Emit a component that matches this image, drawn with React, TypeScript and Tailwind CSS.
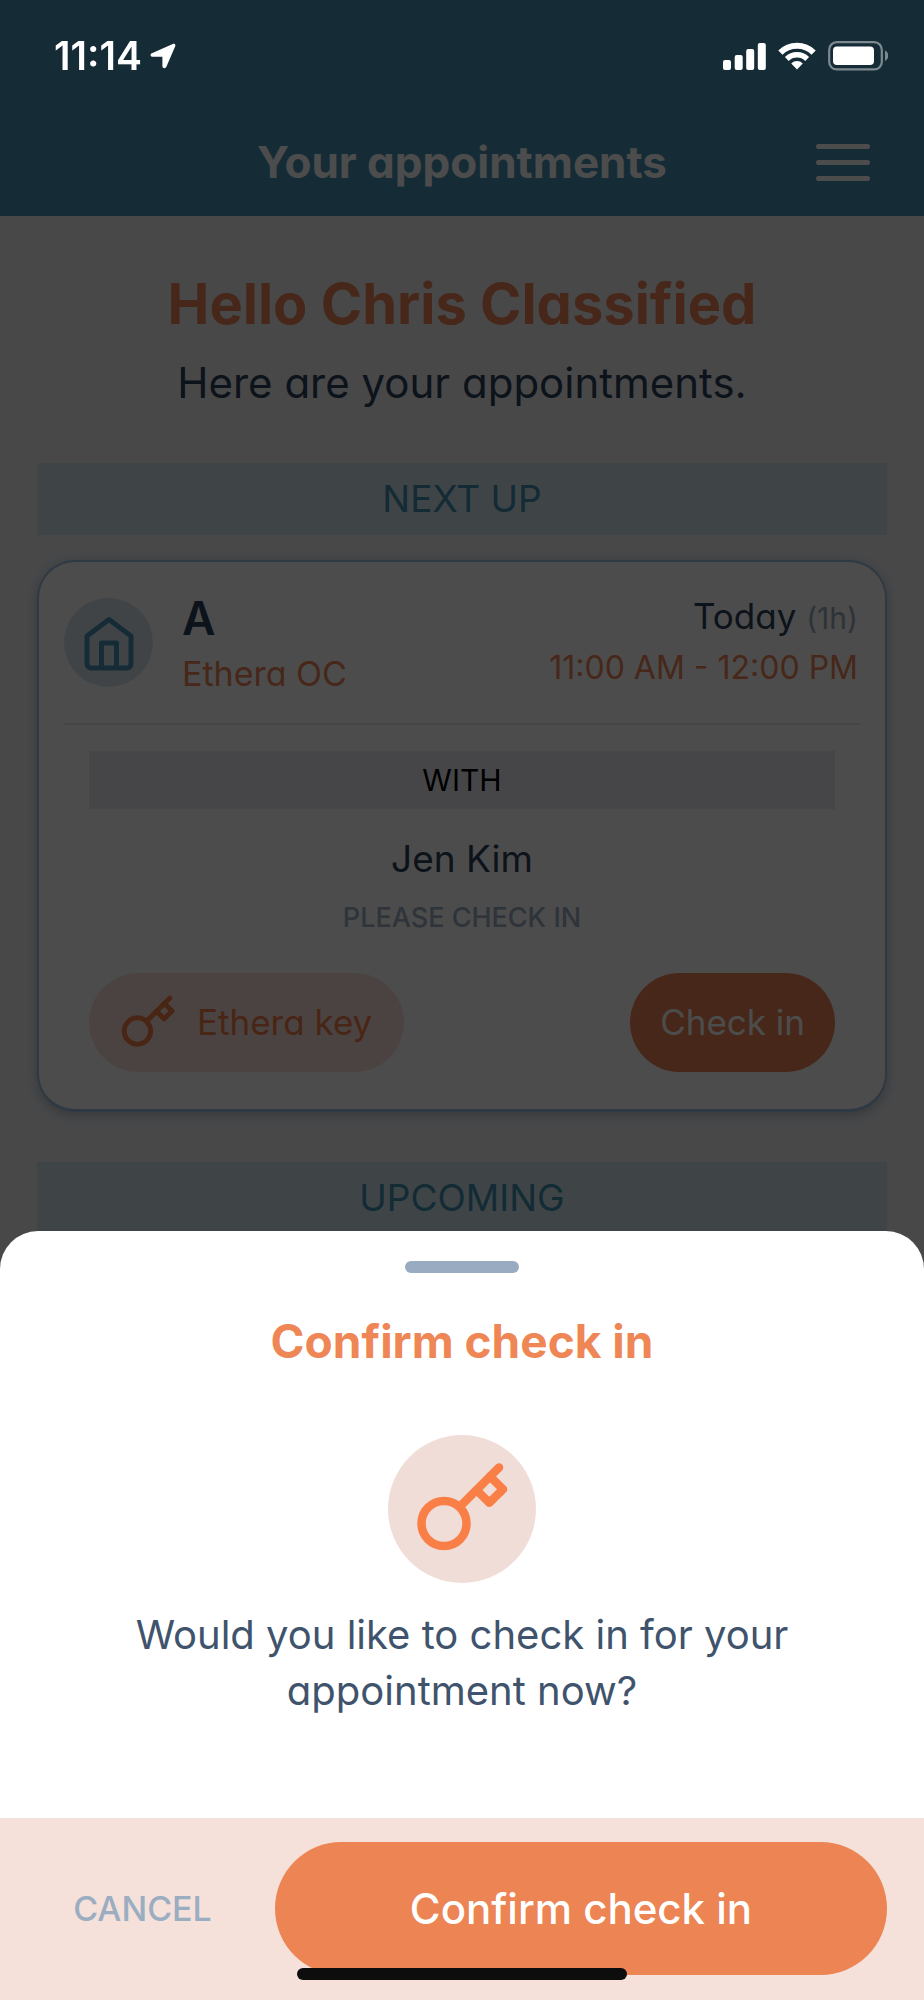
import { type ReactNode } from 'react';

type IconProps = { className?: string };

const appointment = {
    room: 'A',
    location: 'Ethera OC',
    day: 'Today',
    duration: '(1h)',
    time: '11:00 AM - 12:00 PM',
    host: 'Jen Kim',
};

function KeyIcon({ className }: IconProps) {
    return (
        <svg
            viewBox="0 2 92 90"
            fill="none"
            stroke="currentColor"
            strokeWidth="8.5"
            strokeLinecap="round"
            strokeLinejoin="round"
            overflow="visible"
            aria-hidden="true"
            className={className}
        >
            <circle cx="28" cy="61.5" r="22.5" />
            <path d="M44.5 44 83 5.5" />
            <path d="M74 14.5 87 27.3 73.3 40.8 60.5 28" />
        </svg>
    );
}

function HomeIcon({ className }: IconProps) {
    return (
        <svg
            viewBox="0 0 54 56"
            fill="none"
            stroke="currentColor"
            strokeWidth="5"
            strokeLinejoin="round"
            aria-hidden="true"
            className={className}
        >
            <path d="M5 21 27 4.5 49 21v28a4 4 0 0 1-4 4H9a4 4 0 0 1-4-4z" />
            <path d="M19.5 53V28h15v25" />
        </svg>
    );
}

function StatusBar() {
    return (
        <div className="fixed inset-x-0 top-0 z-50 flex h-28 items-center justify-between pr-9 pl-[54px] text-white">
            <div className="flex items-center gap-2">
                <span className="text-[39px] font-semibold">11:14</span>
                <svg viewBox="0 0 26 26" className="h-[26px] w-[26px]" aria-hidden="true">
                    <path
                        d="M1.9 10.2 22.8 1c1.7-.7 3.1.6 2.4 2.3L16.4 23.8c-.9 2.2-4 1.7-4-.8V13.8H2.9c-2.6 0-3.2-2.6-1-3.6z"
                        fill="currentColor"
                    />
                </svg>
            </div>
            <div className="flex items-center gap-3">
                <svg viewBox="0 0 43 28" className="h-7 w-[43px]" fill="currentColor" aria-hidden="true">
                    <rect x="0" y="18" width="8" height="10" rx="2" />
                    <rect x="11.7" y="13" width="8" height="15" rx="2" />
                    <rect x="23.2" y="7" width="8" height="21" rx="2" />
                    <rect x="34.8" y="1" width="8" height="27" rx="2" />
                </svg>
                <svg viewBox="0 0 38 28" className="h-7 w-[38px]" fill="none" stroke="currentColor" aria-hidden="true">
                    <path d="M2.4 10.6a23.5 23.5 0 0 1 33.2 0" strokeWidth="6" />
                    <path d="M8.8 17a14.5 14.5 0 0 1 20.4 0" strokeWidth="5.4" />
                    <path d="M19 27.5 13.2 21.5a8.2 8.2 0 0 1 11.6 0z" fill="currentColor" stroke="none" />
                </svg>
                <svg viewBox="0 0 60 30" className="h-[30px] w-[60px]" aria-hidden="true">
                    <rect x="1.2" y="1.2" width="52.6" height="27.2" rx="7.5" fill="none" stroke="#7d8990" strokeWidth="2.2" />
                    <rect x="5" y="5.5" width="41" height="18.5" rx="4" fill="currentColor" />
                    <path d="M57 9.5q3.4 1.8 3.4 5.2T57 20z" fill="#7d8990" />
                </svg>
            </div>
        </div>
    );
}

function SectionBand({ children }: { children: ReactNode }) {
    return (
        <h2 className="flex h-18 items-center justify-center bg-[#d2e6ed] text-[37px] text-[#4090b2]">
            {children}
        </h2>
    );
}

function AppointmentCard() {
    return (
        <article className="mt-[25px] rounded-[38px] border-2 border-b-3 border-[#9cc0e0] bg-white px-[25px] pt-7 pb-[37px] shadow-[0_3px_12px_rgba(30,50,80,0.3)]">
            <div className="flex items-start justify-between border-b-2 border-[#e0e6ea] pb-[21px]">
                <div className="flex items-start">
                    <div className="mt-2 flex h-[89px] w-[89px] items-center justify-center rounded-full bg-[#d8e5ee]">
                        <HomeIcon className="h-14 w-[54px] text-[#4693b4]" />
                    </div>
                    <div className="ml-[29px] leading-14">
                        <h3 className="text-[46px] font-semibold text-[#2c4258]">{appointment.room}</h3>
                        <p className="text-[34px] text-[#ec8454]">{appointment.location}</p>
                    </div>
                </div>
                <div className="pt-px pr-0.5 text-right leading-[50px]">
                    <p className="text-[35px] text-[#2c4258]">
                        {appointment.day} <span className="text-[30px] text-[#9aaaba]">{appointment.duration}</span>
                    </p>
                    <p className="text-[32px] text-[#ec8454]">{appointment.time}</p>
                </div>
            </div>

            <div className="px-[25px] pt-[26px] text-center">
                <p className="flex h-[58px] items-center justify-center bg-[#eaecf0] text-[30px] text-black">
                    WITH
                </p>
                <p className="mt-5 text-[37px] leading-[60px] text-[#2c4258]">{appointment.host}</p>
                <p className="text-[27px] leading-[58px] font-medium text-[#9aaec4]">PLEASE CHECK IN</p>
                <div className="mt-[26px] flex h-[99px] items-stretch justify-between">
                    <button
                        type="button"
                        className="flex items-center gap-[22px] rounded-full bg-[#fae0dc] px-8 text-[35px] text-[#f07c44]"
                    >
                        <KeyIcon className="h-[53px] w-[54px]" />
                        Ethera key
                    </button>
                    <button type="button" className="rounded-full bg-[#ec8454] px-[30px] text-[35px] text-white">
                        Check in
                    </button>
                </div>
            </div>
        </article>
    );
}

function ConfirmSheet() {
    return (
        <div className="fixed inset-0 z-40 flex flex-col justify-end bg-black/70">
            <div role="dialog" aria-labelledby="confirm-title" className="relative rounded-t-[38px] bg-white pt-[30px]">
                <div className="mx-auto h-3 w-[114px] rounded-full bg-[#98abc0]" />
                <div className="flex flex-col items-center px-20 pb-[99px] text-center">
                    <h2 id="confirm-title" className="mt-10 text-[46px] leading-14 font-bold text-[#ef8656]">
                        Confirm check in
                    </h2>
                    <div className="mt-[66px] flex h-[148px] w-[148px] items-center justify-center rounded-full bg-[#f1ddd8]">
                        <KeyIcon className="h-[90px] w-[92px] text-[#f97f47]" />
                    </div>
                    <p className="mt-6 text-[40px] leading-14 text-[#3f546c]">
                        Would you like to check in for your appointment now?
                    </p>
                </div>
                <div className="flex items-center gap-[27px] bg-[#f6e0da] px-[37px] pt-6 pb-[25px]">
                    <button type="button" className="w-[211px] text-[34px] font-medium text-[#9aadc1]">
                        CANCEL
                    </button>
                    <button
                        type="button"
                        className="h-[133px] flex-1 rounded-full bg-[#ec8454] text-[42px] font-medium text-white"
                    >
                        Confirm check in
                    </button>
                </div>
                {/* home indicator */}
                <div className="absolute bottom-5 left-1/2 h-3 w-[330px] -translate-x-1/2 rounded-full bg-[#0d0d0d]" />
            </div>
        </div>
    );
}

export default function App() {
    return (
        <div className="min-h-screen bg-[#f0f2f5] font-['Inter','Liberation_Sans',sans-serif] [font-feature-settings:'cv11']">
            <StatusBar />

            <header className="relative flex h-[216px] items-center justify-center bg-[#4693b4] pt-[108px]">
                <h1 className="text-[44px] font-bold text-white">Your appointments</h1>
                <button type="button" aria-label="Menu" className="absolute right-[54px] flex flex-col gap-[11px]">
                    <span className="h-[5px] w-[54px] rounded-full bg-white" />
                    <span className="h-[5px] w-[54px] rounded-full bg-white" />
                    <span className="h-[5px] w-[54px] rounded-full bg-white" />
                </button>
            </header>

            <main className="px-[37px] pt-14">
                <div className="mb-[50px] text-center">
                    <p className="text-[56px] leading-16 font-bold text-[#ec8454]">Hello Chris Classified</p>
                    <p className="mt-[17px] text-[42px] leading-[60px] text-[#2c4258]">Here are your appointments.</p>
                </div>
                <SectionBand>NEXT UP</SectionBand>
                <AppointmentCard />
                <div className="mt-[50px]">
                    <SectionBand>UPCOMING</SectionBand>
                </div>
            </main>

            <ConfirmSheet />
        </div>
    );
}
